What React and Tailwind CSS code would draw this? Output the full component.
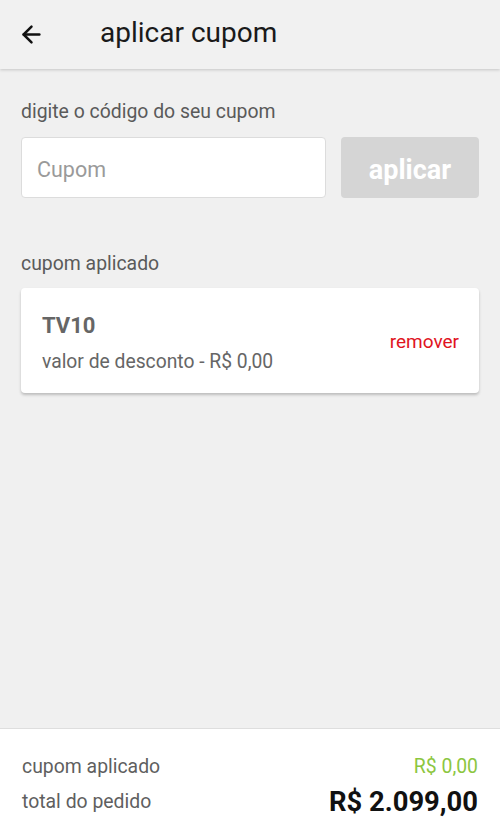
import { ArrowLeft } from 'lucide-react';

export default function App() {
  return (
    <div className="flex h-[817px] w-[500px] flex-col bg-[#f0f0f0]" style={{ fontFamily: 'Roboto, "Liberation Sans", sans-serif' }}>
      {/* Header */}
      <div className="flex h-[69px] shrink-0 items-center bg-[#f1f1f1] shadow-[0_1px_3px_rgba(0,0,0,0.18)]">
        <div className="flex w-[100px] items-center pl-[18px]">
          <ArrowLeft size={27} strokeWidth={2.2} color="#111" />
        </div>
        <h1 className="pb-[3px] text-[28px] leading-none text-[#1a1a1a]">aplicar cupom</h1>
      </div>

      {/* Body */}
      <div className="flex-1 px-[21px] pt-[32px]">
        <p className="text-[19.4px] leading-[22px] text-[#5a5a5a]">digite o código do seu cupom</p>
        <div className="mt-[14px] flex gap-[15px]">
          <input
            placeholder="Cupom"
            className="h-[61px] w-[305px] rounded-[4px] border border-[#dcdcdc] bg-white px-[15px] pt-[4px] text-[21.5px] text-[#333] outline-none placeholder:text-[#9a9a9a]"
          />
          <button className="h-[61px] flex-1 rounded-[4px] bg-[#d5d5d5] pt-[6px] text-[27px] font-bold text-white">aplicar</button>
        </div>

        <p className="mt-[55px] text-[19.4px] leading-[22px] text-[#5a5a5a]">cupom aplicado</p>
        <div className="mt-[13px] flex h-[105px] items-center justify-between rounded-[4px] bg-white pl-[21px] pr-[20px] shadow-[0_2px_3px_rgba(0,0,0,0.22)]">
          <div className="pt-[6px]">
            <p className="text-[22px] font-bold leading-6 text-[#666]">TV10</p>
            <p className="mt-[12px] text-[19.3px] leading-6 text-[#666]">valor de desconto - R$ 0,00</p>
          </div>
          <span className="pt-[3px] text-[19px] text-[#e0141e]">remover</span>
        </div>
      </div>

      {/* Footer */}
      <div className="h-[89px] shrink-0 border-t border-[#dedede] bg-white px-[22px] pt-[27px]">
        <div className="flex items-center justify-between">
          <span className="text-[19.4px] leading-[22px] text-[#5f5f5f]">cupom aplicado</span>
          <span className="text-[19.4px] leading-[22px] text-[#8cc63f]">R$ 0,00</span>
        </div>
        <div className="mt-[11px] flex items-center justify-between">
          <span className="text-[19.4px] leading-[22px] text-[#5f5f5f]">total do pedido</span>
          <span className="text-[27.4px] font-bold leading-[26px] text-[#111]">R$ 2.099,00</span>
        </div>
      </div>
    </div>
  );
}
